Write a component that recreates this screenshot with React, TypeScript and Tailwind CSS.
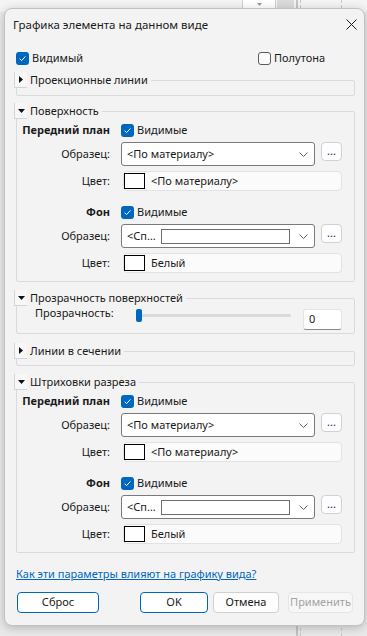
import React from 'react'

type CheckProps = { checked: boolean }

function Check({ checked }: CheckProps) {
  if (!checked) return <span className="block h-[13px] w-[13px] shrink-0 rounded-[3px] border border-[#5c5c5c] bg-[#fbfbfb]" />
  return (
    <span className="flex h-[13px] w-[13px] shrink-0 items-center justify-center rounded-[3px] bg-[#0067c0]">
      <svg width="9" height="9" viewBox="0 0 9 9">
        <path d="M1.6 4.7 L3.6 6.6 L7.4 2.4" stroke="white" strokeWidth="1" fill="none" />
      </svg>
    </span>
  )
}

function Triangle({ open }: { open: boolean }) {
  return open ? (
    <svg width="7" height="4" viewBox="0 0 7 4">
      <path d="M0 0 H7 L3.5 4 Z" fill="#111" />
    </svg>
  ) : (
    <svg width="4" height="7" viewBox="0 0 4 7">
      <path d="M0 0 V7 L4 3.5 Z" fill="#111" />
    </svg>
  )
}

function GroupHeader({ title, open }: { title: string; open: boolean }) {
  return (
    <div className="relative z-10 -ml-[2px] flex h-[16px] items-center">
      <span className="flex h-[16px] w-[13px] items-center justify-center border-b border-l border-[#d4d4d4] bg-[#f7f7f7]">
        <Triangle open={open} />
      </span>
      <span className="bg-[#f3f3f3] pl-[3px] pr-[3px] leading-[16px]">{title}</span>
    </div>
  )
}

function Chevron() {
  return (
    <svg width="9" height="5" viewBox="0 0 9 5" className="shrink-0">
      <path d="M0.5 0.5 L4.5 4.5 L8.5 0.5" stroke="#606060" strokeWidth="1" fill="none" />
    </svg>
  )
}

function Label({ children, bold }: { children: React.ReactNode; bold?: boolean }) {
  return <div className={'w-[93px] shrink-0 text-right ' + (bold ? 'font-bold' : '')}>{children}</div>
}

function VisibleRow({ label }: { label: string }) {
  return (
    <div className="flex h-[16px] items-center">
      <Label bold>{label}</Label>
      <div className="ml-[11px] flex items-center gap-[3px]">
        <Check checked />
        <span>Видимые</span>
      </div>
    </div>
  )
}

function PatternRow({ special }: { special?: boolean }) {
  return (
    <div className="mt-[4px] flex h-[24px] items-center">
      <Label>Образец:</Label>
      <div className="ml-[11px] flex h-[24px] w-[194px] items-center rounded-[3px] border border-[#7a7a7a] bg-white pl-[5px] pr-[6px]">
        {special ? (
          <>
            <span>&lt;Сп…</span>
            <span className="ml-[5px] h-[15px] w-[129px] border border-[#6e6e6e] bg-white" />
            <span className="flex-1" />
          </>
        ) : (
          <span className="flex-1">&lt;По материалу&gt;</span>
        )}
        <Chevron />
      </div>
      <div className="ml-[6px] flex h-[19px] w-[21px] items-start justify-center self-start rounded-[4px] border border-[#d1d1d1] bg-[#fdfdfd] text-[#1a1a5a] leading-[15px]">
        ...
      </div>
    </div>
  )
}

function ColorRow({ value }: { value: string }) {
  return (
    <div className="mt-[5px] flex h-[20px] items-center">
      <Label>Цвет:</Label>
      <div className="ml-[13px] flex h-[20px] w-[219px] items-center rounded-[4px] border border-[#e2e2e2] bg-[#fbfbfb]">
        <span className="h-[16px] w-[21px] border border-black bg-white" />
        <span className="ml-[6px]">{value}</span>
      </div>
    </div>
  )
}

function FillSection({ firstColor }: { firstColor: string }) {
  return (
    <div className="pt-[10px] pb-[8px]">
      <VisibleRow label="Передний план" />
      <PatternRow />
      <ColorRow value={firstColor} />
      <div className="mt-[13px]">
        <VisibleRow label="Фон" />
      </div>
      <PatternRow special />
      <ColorRow value="Белый" />
    </div>
  )
}

function Btn({ children, w, kind }: { children: string; w: string; kind: 'blue' | 'plain' | 'off' }) {
  const cls =
    kind === 'blue'
      ? 'border-[#0067c0] bg-white text-[#1a1a1a]'
      : kind === 'plain'
        ? 'border-[#d0d0d0] bg-[#fdfdfd] text-[#1a1a1a]'
        : 'border-[#e6e6e6] bg-[#f7f7f7] text-[#a3a3a3]'
  return <div className={'flex h-[21px] items-center justify-center rounded-[4px] border ' + w + ' ' + cls}>{children}</div>
}

export default function App() {
  return (
    <div className="relative h-[636px] w-[367px] overflow-hidden whitespace-nowrap bg-[#e9e9e9] font-['Noto_Sans',sans-serif] text-[11px] text-[#1a1a1a]">
      {/* фон приложения за диалогом */}
      <div className="absolute left-0 top-0 h-[12px] w-[367px] bg-[#f4f4f4]" />
      <div className="absolute left-[242px] top-0 flex h-[10px] w-[34px] justify-center border-x border-[#cfcfcf] bg-white">
        <svg width="5" height="3" viewBox="0 0 5 3" className="mt-[3px]">
          <path d="M0 0 H5 L2.5 3 Z" fill="#9a9a9a" />
        </svg>
      </div>
      <div className="absolute left-[277px] top-0 h-[10px] w-[17px] bg-[#dadada]" />
      <div className="absolute left-[296px] top-0 h-[636px] w-[2px] bg-[#c4c4c4]" />
      <div className="absolute left-[300px] top-0 h-[636px] border-l border-dashed border-[#c8c8c8]" />
      <div className="absolute left-[341px] top-0 h-[636px] border-l border-dashed border-[#c8c8c8]" />

      <div className="relative ml-[4px] mt-[8px] flex h-[618px] w-[361px] flex-col rounded-[8px] border border-[#c2c2c2] bg-[#f3f3f3] shadow-[0_2px_10px_rgba(0,0,0,0.22)]">
        <div className="flex h-[31px] items-center justify-between pl-[8px] pr-[7px]">
          <span className="text-[11.5px]">Графика элемента на данном виде</span>
          <svg width="11" height="11" viewBox="0 0 11 11">
            <path d="M0.5 0.5 L10.5 10.5 M10.5 0.5 L0.5 10.5" stroke="#1a1a1a" strokeWidth="1" />
          </svg>
        </div>

        <div className="pl-[11px] pr-[9px]">
          <div className="mt-[10px] flex h-[16px] items-center">
            <div className="flex w-[242px] items-center">
              <Check checked />
              <span className="ml-[3px]">Видимый</span>
            </div>
            <Check checked={false} />
            <span className="ml-[3px]">Полутона</span>
          </div>

          <div className="mt-[6px]">
            <GroupHeader title="Проекционные линии" open={false} />
            <div className="-mt-[8px] h-[16px] rounded-[2px] border border-[#dadada]" />
          </div>

          <div className="mt-[7px]">
            <GroupHeader title="Поверхность" open />
            <div className="-mt-[8px] rounded-[2px] border border-[#dadada]">
              <FillSection firstColor="<По материалу>" />
            </div>
          </div>

          <div className="mt-[8px]">
            <GroupHeader title="Прозрачность поверхностей" open />
            <div className="-mt-[8px] rounded-[2px] border border-[#dadada] pb-[3px] pt-[10px]">
              <div className="flex h-[21px] items-start pl-[18px]">
                <span className="-mt-[4px] w-[101px] shrink-0">Прозрачность:</span>
                <div className="flex h-[13px] w-[155px] items-center">
                  <span className="h-[13px] w-[6px] rounded-[2px] bg-[#0067c0]" />
                  <span className="h-[3px] flex-1 rounded-[1px] bg-[#dadada]" />
                </div>
                <div className="ml-[12px] flex h-[21px] w-[39px] items-center rounded-[3px] border border-[#e4e4e4] border-b-[#8a8a8a] bg-white pl-[5px]">
                  0
                </div>
              </div>
            </div>
          </div>

          <div className="mt-[9px]">
            <GroupHeader title="Линии в сечении" open={false} />
            <div className="-mt-[8px] h-[15px] rounded-[2px] border border-[#dadada]" />
          </div>

          <div className="mt-[8px]">
            <GroupHeader title="Штриховки разреза" open />
            <div className="-mt-[8px] rounded-[2px] border border-[#dadada]">
              <FillSection firstColor="<По материалу>" />
            </div>
          </div>

          <div className="mt-[13px] flex h-[16px] items-center">
            <span className="text-[#0067c0] underline">Как эти параметры влияют на графику вида?</span>
          </div>

          <div className="mt-[10px] flex items-center pl-[1px]">
            <Btn w="w-[82px]" kind="blue">Сброс</Btn>
            <div className="ml-[41px]">
              <Btn w="w-[68px]" kind="blue">OK</Btn>
            </div>
            <div className="ml-[5px]">
              <Btn w="w-[66px]" kind="plain">Отмена</Btn>
            </div>
            <div className="ml-[9px]">
              <Btn w="w-[65px]" kind="off">Применить</Btn>
            </div>
          </div>
        </div>
      </div>
    </div>
  )
}
